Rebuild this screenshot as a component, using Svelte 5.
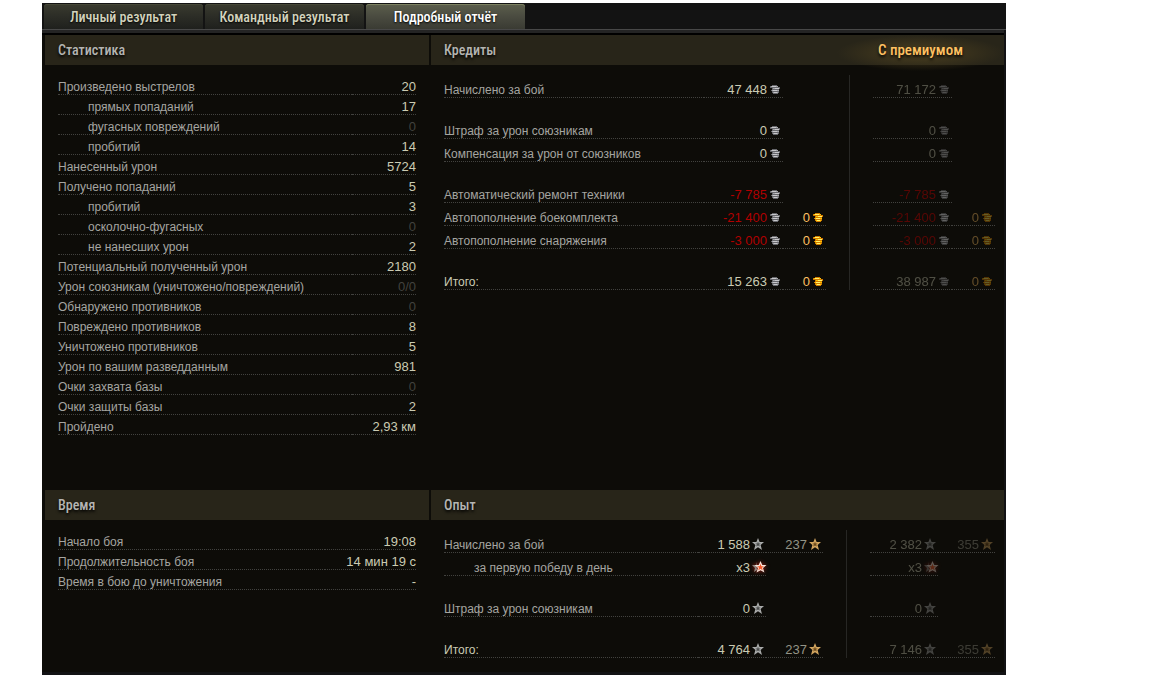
<script>
	const tabs = ['Личный результат', 'Командный результат', 'Подробный отчёт'];
	let active = $state(2);

	const stats = [
		['Произведено выстрелов', '20'],
		['прямых попаданий', '17', true],
		['фугасных повреждений', '0', true],
		['пробитий', '14', true],
		['Нанесенный урон', '5724'],
		['Получено попаданий', '5'],
		['пробитий', '3', true],
		['осколочно-фугасных', '0', true],
		['не нанесших урон', '2', true],
		['Потенциальный полученный урон', '2180'],
		['Урон союзникам (уничтожено/повреждений)', '0/0'],
		['Обнаружено противников', '0'],
		['Повреждено противников', '8'],
		['Уничтожено противников', '5'],
		['Урон по вашим разведданным', '981'],
		['Очки захвата базы', '0'],
		['Очки защиты базы', '2'],
		['Пройдено', '2,93 км']
	];

	const time = [
		['Начало боя', '19:08'],
		['Продолжительность боя', '14 мин 19 с'],
		['Время в бою до уничтожения', '-']
	];

	// null is an empty line between groups
	const credits = [
		{ label: 'Начислено за бой', main: '47 448', premium: '71 172' },
		null,
		{ label: 'Штраф за урон союзникам', main: '0', premium: '0' },
		{ label: 'Компенсация за урон от союзников', main: '0', premium: '0' },
		null,
		{ label: 'Автоматический ремонт техники', main: '-7 785', premium: '-7 785' },
		{ label: 'Автопополнение боекомплекта', main: '-21 400', extra: '0', premium: '-21 400', premiumExtra: '0' },
		{ label: 'Автопополнение снаряжения', main: '-3 000', extra: '0', premium: '-3 000', premiumExtra: '0' },
		null,
		{ label: 'Итого:', total: true, main: '15 263', extra: '0', premium: '38 987', premiumExtra: '0' }
	];

	const experience = [
		{ label: 'Начислено за бой', main: '1 588', extra: '237', premium: '2 382', premiumExtra: '355' },
		{ label: 'за первую победу в день', sub: true, bonus: true, main: 'x3', premium: 'x3' },
		null,
		{ label: 'Штраф за урон союзникам', main: '0', premium: '0' },
		null,
		{ label: 'Итого:', total: true, main: '4 764', extra: '237', premium: '7 146', premiumExtra: '355' }
	];
</script>

{#snippet coin(gold)}
	<svg class="coin" class:gold width="10" height="10" viewBox="0 0 10 10" aria-hidden="true">
		<path class="edge" d="M0 1h2V0h5v1h1v1h2v2H9v4H8v1H3V8H2V6H1V5h1V3H0z" />
		<path class="face" d="M1 1h7v1H1zM3 3h6v1H3zM2 5h7v1H2zM3 7h5v1H3z" />
		<path class="shine" d="M2 1h4v1H2zM5 3h4v1H5zM3 5h4v1H3zM4 7h3v1H4z" />
	</svg>
{/snippet}

{#snippet star(kind)}
	<svg class="star {kind}" width="13" height="14" viewBox="0 0 13 14" aria-hidden="true">
		{#if kind === 'bonus'}
			<path class="back" d="M4 1l1 3H0l3 3-1 4 3-2z" />
			<path class="outer" d="M8.500 0l1.800 4h4.200L11 7l1.400 4.500-3.900-2.200-4 2.200L6 7 2.500 4h4.200z" />
			<path class="inner" d="M8.500 2.800l.9 2.400h2.600L10 6.800l.8 2.600-2.300-1.600-2.300 1.600L7 6.800 5 5.200h2.600z" />
		{:else}
			<path class="outer" d="M6 0l1.600 4H12L8.600 7l1.400 5-4-2.700L2 12l1.400-5L0 4h4.400z" />
			<path class="inner" d="M6 3.500l.7 1.900h2L7.200 6.600l.6 1.900L6 7.400 4.200 8.500l.6-1.900-1.500-1.200h2z" />
		{/if}
	</svg>
{/snippet}

{#snippet simple(rows, name)}
	<table class="simple {name}">
		<tbody>
			{#each rows as [label, value, sub]}
				<tr>
					<th scope="row" class:sub>{label}</th>
					<td class:zero={value === '0' || value === '0/0'}>{value}</td>
				</tr>
			{/each}
		</tbody>
	</table>
{/snippet}

{#snippet ledger(rows, name)}
	<table class="ledger {name}">
		<colgroup>
			<col />
			<col class="main" />
			<col class="extra" />
			<col class="rule" />
			<col class="space" />
			<col class="main" />
			<col class="extra" />
		</colgroup>
		<tbody>
			{#each rows as row}
				{#if row}
					<tr class:total={row.total}>
						<th scope="row" class:sub={row.sub}>{row.label}</th>
						{@render amount(row.main, name, row.bonus, false)}
						{@render extra(row.extra, name, false)}
						<td class="divider"></td>
						<td></td>
						{@render amount(row.premium, name, row.bonus, true)}
						{@render extra(row.premiumExtra, name, true)}
					</tr>
				{:else}
					<tr class="gap">
						<td colspan="3"></td>
						<td class="divider"></td>
						<td colspan="3"></td>
					</tr>
				{/if}
			{/each}
		</tbody>
	</table>
{/snippet}

{#snippet amount(value, name, bonus, premium)}
	<td class="line">
		<span class="value" class:premium class:minus={value[0] === '-'}>
			{value}
			{#if name === 'credits'}{@render coin(false)}{:else}{@render star(bonus ? 'bonus' : 'silver')}{/if}
		</span>
	</td>
{/snippet}

{#snippet extra(value, name, premium)}
	<td class:line={value}>
		{#if value}
			<span class="value {name}-extra" class:premium>
				{value}
				{#if name === 'credits'}{@render coin(true)}{:else}{@render star('gold')}{/if}
			</span>
		{/if}
	</td>
{/snippet}

<main class="report">
	<nav class="tabs">
		{#each tabs as tab, i}
			<button class:active={active === i} onclick={() => (active = i)}>{tab}</button>
		{/each}
	</nav>

	<div class="sections">
		<section class="upper">
			<h2>Статистика</h2>
			{@render simple(stats, 'stats')}
		</section>
		<section class="upper">
			<h2>Кредиты <span class="with-premium">С премиумом</span></h2>
			{@render ledger(credits, 'credits')}
		</section>
		<section>
			<h2>Время</h2>
			{@render simple(time, 'time')}
		</section>
		<section>
			<h2>Опыт</h2>
			{@render ledger(experience, 'experience')}
		</section>
	</div>
</main>

<style>
	:global(body) {
		background: #fff;
	}

	.report {
		margin: 0 146px 0 42px;
		border-top: 3px solid #fff;
		background: #121214;
		font: 12px/15px 'Liberation Sans', Arial, sans-serif;
		color: #a5a5a1;
	}

	.tabs {
		display: flex;
		gap: 2px;
		height: 26px;
		padding: 0 2px;
		background: #131313;
		border-bottom: 1px solid #484848;
	}

	.tabs button {
		width: 159px;
		margin: 1px 0 0;
		padding: 0;
		border: 0;
		border-radius: 3px 3px 0 0;
		background: linear-gradient(#3a3b2f, #2d2e27 45%, #1f201d);
		box-shadow: inset 0 1px #454737;
		font: 500 14px/26px 'Roboto Condensed', 'Liberation Sans Narrow', 'Liberation Sans', sans-serif;
		color: #d3d3bd;
		text-shadow: 0 1px 2px #000;
		cursor: pointer;
	}

	.tabs button.active {
		background: linear-gradient(#5c5e4c, #4a4b40 50%, #3a3b33);
		box-shadow: inset 0 1px #7b8060;
		color: #fff;
	}

	.sections {
		display: grid;
		grid-template-columns: 384fr 573fr;
		column-gap: 2px;
		margin: 0 2px 0 0;
		padding: 2px 0 0 3px;
		border-top: 3px solid #242424;
		background: linear-gradient(#000 2px, #0d0c08 2px);
		border-bottom: 3px solid #121214;
	}

	section {
		min-height: 182px;
	}

	.upper {
		min-height: 455px;
	}

	h2 {
		display: flex;
		justify-content: space-between;
		height: 30px;
		margin: 0 0 10px;
		padding: 0 0 0 13px;
		background: #282519;
		font: 500 14px/30px 'Roboto Condensed', 'Liberation Sans Narrow', 'Liberation Sans', sans-serif;
		color: #b5b5b2;
		text-shadow: 0 2px 3px #000;
	}

	.with-premium {
		height: 36px;
		padding: 0 41px;
		background: radial-gradient(closest-side, #4b3f1f, transparent);
		font-size: 15px;
		color: #ffc162;
	}

	table {
		border-collapse: separate;
		border-spacing: 0;
		table-layout: fixed;
	}

	th,
	td {
		padding: 0;
	}

	th {
		font-weight: normal;
		line-height: 13px;
		text-align: left;
		white-space: nowrap;
	}

	.simple {
		width: calc(100% - 26px);
		margin: 0 13px;
	}

	.simple th,
	.simple td {
		padding-top: 4px;
		border-bottom: 1px dotted #42423f;
	}

	.simple th {
		padding-top: 6px;
	}

	.simple td {
		width: 64px;
		font-size: 13px;
		color: #cbcbb3;
		text-align: right;
	}

	.time td {
		width: 91px;
	}

	.simple .zero {
		color: #42423e;
	}

	.ledger {
		width: calc(100% - 22px);
		margin: 0 9px 0 13px;
	}

	.ledger th,
	.line {
		padding-top: 7px;
		border-bottom: 1px dotted #42423f;
	}

	.ledger th {
		padding-top: 9px;
	}

	.simple .sub,
	.ledger .sub {
		padding-left: 30px;
	}

	.main {
		width: 79px;
	}

	.extra {
		width: 43px;
	}

	.rule {
		width: 24px;
	}

	.space {
		width: 23px;
	}

	.experience .main {
		width: 68px;
	}

	.experience .extra {
		width: 57px;
	}

	.gap td {
		height: 18px;
	}

	.divider {
		border-right: 1px solid #272724;
	}

	.total th {
		color: #cbcbb3;
	}

	.value {
		display: flex;
		justify-content: flex-end;
		align-items: center;
		gap: 3px;
		padding-right: 3px;
		font-size: 13px;
		color: #cbcbb3;
		white-space: nowrap;
	}

	.experience .value {
		gap: 2px;
		padding-right: 1px;
	}

	.value.minus {
		color: #b00000;
	}

	.credits-extra {
		color: #ffc162;
	}

	.experience-extra {
		color: #949486;
	}

	.premium {
		opacity: 0.35;
	}

	.premium.minus {
		opacity: 0.45;
	}

	.coin {
		--edge: #66676b;
		--face: #a5a6aa;
		--shine: #c8c8cb;
	}

	.coin.gold {
		--edge: #d07a00;
		--face: #ffc000;
		--shine: #fff56b;
	}

	.edge {
		fill: var(--edge);
	}

	.face {
		fill: var(--face);
	}

	.shine {
		fill: var(--shine);
	}

	.silver .outer {
		fill: #a9abaa;
	}

	.silver .inner {
		fill: #4b4d4c;
	}

	.star.gold .outer {
		fill: #d3a660;
	}

	.star.gold .inner {
		fill: #6c4a1c;
	}

	.bonus {
		overflow: visible;
		filter: drop-shadow(0 0 2px #a02010);
	}

	.bonus .back {
		fill: #8d8580;
	}

	.bonus .outer {
		fill: #f5e4da;
	}

	.bonus .inner {
		fill: #f4592a;
	}
</style>
